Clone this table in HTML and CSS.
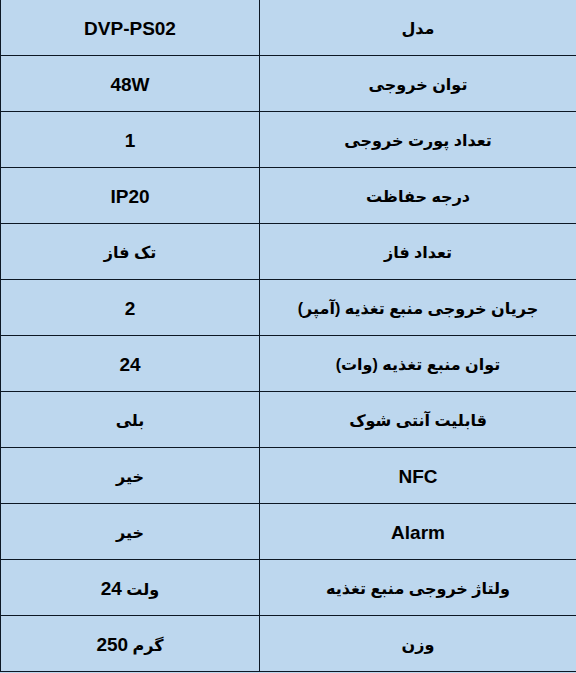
FILE: index.html
```html
<!DOCTYPE html>
<html lang="fa">
<head>
<meta charset="utf-8">
<title>مشخصات DVP-PS02</title>
<link rel="stylesheet" href="styles.css">
</head>
<body>
<table class="spec" dir="rtl">
<colgroup><col class="c-label"><col class="c-value"></colgroup>
<tbody>
<tr><td class="fa">مدل</td><td>DVP-PS02</td></tr>
<tr><td class="fa">توان خروجی</td><td>48W</td></tr>
<tr><td class="fa">تعداد پورت خروجی</td><td>1</td></tr>
<tr><td class="fa">درجه حفاظت</td><td>IP20</td></tr>
<tr><td class="fa">تعداد فاز</td><td class="fa">تک فاز</td></tr>
<tr><td class="fa">جریان خروجی منبع تغذیه (آمپر)</td><td>2</td></tr>
<tr><td class="fa">توان منبع تغذیه (وات)</td><td>24</td></tr>
<tr><td class="fa">قابلیت آنتی شوک</td><td class="fa">بلی</td></tr>
<tr><td>NFC</td><td class="fa">خیر</td></tr>
<tr><td>Alarm</td><td class="fa">خیر</td></tr>
<tr><td class="fa">ولتاژ خروجی منبع تغذیه</td><td class="fa"><span class="ltr" dir="ltr">&#x648;&#x644;&#x62A; <span class="n">24</span></span></td></tr>
<tr><td class="fa">وزن</td><td class="fa"><span class="ltr" dir="ltr">&#x6AF;&#x631;&#x645; <span class="n">250</span></span></td></tr>
</tbody>
</table>
</body>
</html>
```
FILE: styles.css
```css
html, body {
  margin: 0;
  padding: 0;
  background: #bdd7ee;
}
.spec {
  direction: rtl;
  border-collapse: collapse;
  table-layout: fixed;
  width: 576px;
  font-family: "Liberation Sans", "DejaVu Sans", Arial, sans-serif;
  font-weight: bold;
  font-size: 19px;
  color: #000;
  background: #bdd7ee;
}
.c-label { width: 317px; }
.c-value { width: 259px; }
.spec td {
  height: 53px;
  padding: 2px 0 0;
  text-align: center;
  vertical-align: middle;
  border-bottom: 1px solid #0d1824;
  border-left: 1px solid #0d1824;
  border-right: 1px solid #0d1824;
}
.spec td.fa {
  font-size: 16px;
}
.spec td.fa .n {
  font-size: 19px;
}
.ltr {
  direction: ltr;
  unicode-bidi: isolate;
}
.spec td:first-child {
  border-right-color: #aac4dc;
}
```
